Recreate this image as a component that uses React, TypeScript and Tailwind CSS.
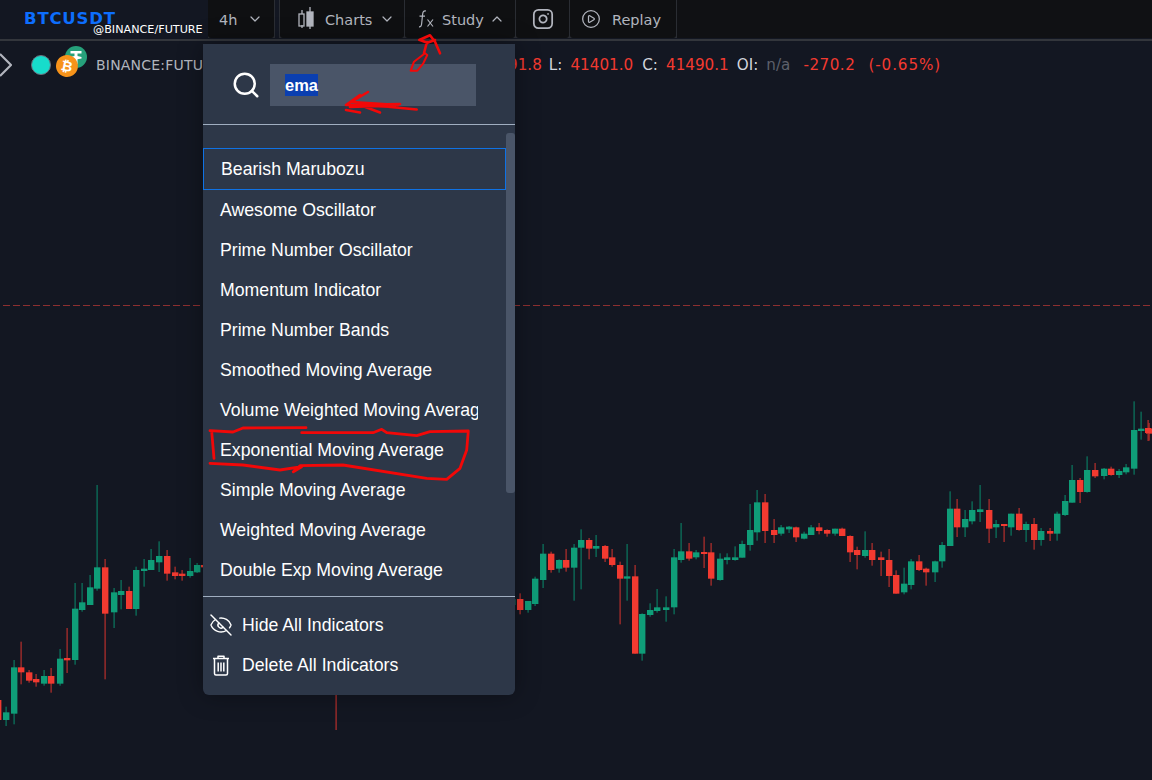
import { ChevronDown, ChevronUp, Search, EyeOff, Instagram, CirclePlay } from 'lucide-react';

type Candle = [number, number, number, number, number, number];

// x, wick top, wick bottom, body top, body bottom (real px), 1 = red
const left: Candle[] = [
  [-6, 690, 750, 690, 750, 1], [18, 710, 768, 727, 750, 0], [41, 570, 763, 592, 731, 0], [63, 515, 643, 592, 607, 1],
  [86, 600, 638, 607, 632, 1], [108, 612, 650, 627, 637, 1], [131, 600, 647, 618, 641, 0], [153, 594, 668, 618, 641, 1],
  [180, 537, 647, 566, 641, 0], [202, 474, 609, 564, 571, 1], [225, 339, 584, 416, 570, 0], [247, 339, 425, 397, 420, 0],
  [270, 315, 405, 352, 405, 0], [292, 45, 362, 292, 356, 0], [315, 267, 628, 292, 431, 1], [341, 354, 474, 367, 427, 0],
  [363, 330, 418, 363, 375, 0], [386, 350, 417, 363, 417, 1], [408, 290, 437, 300, 417, 0], [431, 267, 350, 296, 303, 0],
  [453, 237, 300, 270, 300, 0], [476, 214, 306, 258, 277, 0], [502, 240, 332, 258, 311, 1], [524, 290, 328, 307, 318, 1],
  [547, 300, 332, 311, 318, 1], [570, 264, 323, 303, 318, 0], [592, 279, 309, 285, 307, 0], [612, 280, 300, 285, 292, 1],
];

const middle: Candle[] = [
  [-8, 340, 380, 357, 375, 0], [14, 340, 403, 357, 390, 1], [38, 363, 398, 363, 390, 0], [60, 290, 378, 296, 372, 0],
  [83, 192, 324, 221, 300, 0], [108, 215, 278, 221, 270, 1], [131, 238, 278, 240, 266, 0], [153, 207, 275, 240, 263, 1],
  [176, 192, 362, 203, 263, 0], [198, 148, 328, 180, 203, 0], [221, 174, 238, 180, 206, 1], [243, 165, 231, 198, 206, 0],
  [270, 195, 246, 198, 236, 1], [292, 207, 260, 232, 255, 1], [315, 245, 433, 255, 296, 1], [337, 192, 362, 289, 296, 0],
  [360, 255, 521, 289, 521, 1], [382, 400, 542, 402, 521, 0], [405, 370, 410, 390, 405, 0], [427, 327, 398, 382, 393, 0],
  [453, 349, 425, 382, 390, 0], [476, 207, 403, 232, 382, 0], [498, 129, 248, 214, 240, 0], [521, 189, 242, 214, 236, 1],
  [543, 210, 238, 217, 232, 0], [566, 170, 264, 216, 222, 1], [588, 189, 317, 217, 296, 1], [615, 220, 302, 236, 300, 0],
  [637, 220, 253, 232, 240, 0], [660, 199, 242, 232, 240, 0], [682, 182, 233, 192, 233, 0], [705, 72, 212, 150, 195, 0],
  [727, 30, 182, 67, 157, 0], [750, 42, 189, 67, 153, 1], [776, 117, 189, 150, 165, 1], [798, 135, 167, 142, 161, 0],
  [821, 138, 159, 140, 148, 0], [843, 140, 186, 142, 172, 1], [866, 155, 178, 161, 176, 0], [888, 135, 165, 142, 165, 0],
  [911, 129, 163, 142, 153, 1], [937, 148, 170, 150, 161, 1],
];

const right: Candle[] = [
  [15, 416, 437, 416, 431, 0], [37, 413, 438, 416, 438, 1], [60, 436, 516, 438, 487, 1], [82, 470, 538, 480, 495, 1],
  [105, 424, 503, 480, 498, 0], [127, 459, 527, 480, 510, 1], [153, 485, 558, 502, 510, 1], [176, 477, 591, 510, 558, 1],
  [198, 541, 611, 555, 611, 1], [221, 533, 613, 581, 607, 0], [243, 507, 598, 514, 585, 0], [266, 495, 543, 514, 540, 1],
  [288, 533, 587, 536, 547, 1], [315, 512, 576, 514, 547, 0], [337, 456, 533, 465, 514, 0], [360, 304, 468, 356, 468, 0],
  [382, 327, 441, 356, 412, 1], [405, 360, 441, 387, 412, 0], [427, 334, 403, 360, 394, 0], [450, 285, 396, 358, 366, 0],
  [476, 327, 459, 360, 416, 1], [498, 390, 444, 402, 412, 0], [521, 402, 456, 402, 408, 1], [543, 371, 437, 371, 412, 0],
  [566, 354, 422, 371, 420, 1], [588, 395, 456, 402, 420, 0], [611, 384, 479, 402, 450, 1], [633, 414, 467, 423, 450, 0],
  [660, 414, 453, 423, 431, 1], [682, 365, 452, 371, 431, 0], [705, 315, 378, 333, 375, 0], [727, 225, 338, 270, 338, 0],
  [750, 264, 339, 270, 306, 1], [772, 199, 308, 240, 306, 0], [795, 219, 264, 240, 259, 1], [821, 234, 268, 236, 258, 0],
  [843, 230, 257, 236, 255, 1], [866, 237, 264, 243, 255, 0], [888, 222, 253, 232, 247, 0], [911, 34, 254, 120, 236, 0],
  [933, 65, 149, 116, 123, 0], [956, 99, 152, 116, 131, 1],
];

// zoom crops were 3x, offsets are the crop origin
const toReal = (list: Candle[], ox: number, oy: number) =>
  list.map(([x, wt, wb, bt, bb, red]) => ({
    x: ox + x / 3,
    wt: oy + wt / 3,
    wb: oy + wb / 3,
    bt: oy + bt / 3,
    bb: oy + bb / 3,
    red: red === 1,
  }));

const candles = [
  ...toReal(left, 0, 470),
  ...toReal(middle, 515, 480),
  ...toReal(right, 830, 390),
  { x: 336, wt: 660, wb: 730, bt: 660, bb: 672, red: true },
  { x: 1148, wt: 420, wb: 441, bt: 428, bb: 433, red: true },
];

const indicators = [
  'Awesome Oscillator',
  'Prime Number Oscillator',
  'Momentum Indicator',
  'Prime Number Bands',
  'Smoothed Moving Average',
  'Volume Weighted Moving Average',
  'Exponential Moving Average',
  'Simple Moving Average',
  'Weighted Moving Average',
  'Double Exp Moving Average',
];

function CandleChart() {
  return (
    <svg className="absolute left-0 top-0" width={1152} height={780}>
      <line x1={0} y1={305.5} x2={1152} y2={305.5} stroke="#e0403a" strokeOpacity={0.6} strokeDasharray="7 3" strokeDashoffset={-3} />
      {candles.map((c, i) => {
        const color = c.red ? '#f23a30' : '#0f9d78';
        const wick = c.red ? '#b8302c' : '#0b7a60';
        return (
          <g key={i}>
            <rect x={Math.round(c.x) - 0.5} y={c.wt} width={1.2} height={c.wb - c.wt} fill={wick} />
            <rect x={Math.round(c.x) - 3} y={c.bt} width={6.4} height={Math.max(c.bb - c.bt, 2)} fill={color} />
          </g>
        );
      })}
    </svg>
  );
}

function Annotations() {
  return (
    <svg className="absolute left-0 top-0 pointer-events-none z-20" width={1152} height={780} fill="none" stroke="#f20808" strokeLinecap="round" strokeLinejoin="round">
      <path d="M410.7 70.7 L414 61.7 L425 53.3 L427.3 55 L423.3 63.3 L417.3 70.7 Z" strokeWidth={2} />
      <path d="M419.3 40 L430 35.3 L435 41.7 L440 53.3 M420 40 L427.3 42.7 L435 40 M427 42 L424 53" strokeWidth={2.6} />
      <path d="M346 105 L368 92 M346 105 L360 95 M346 105 L400 104 M350 107 L380 106 L416.7 109.5 M346 110 L360 112.5 M360 105 L380 112.5 M352 102 L398 105 M350 105 L395 107" strokeWidth={2.6} />
      <path d="M210 430.7 L233 432 L243 428 L306 427.7 M301.7 432.7 L373 432.7 L381.7 429.3 L386.7 432.7 L416.7 435.7 L430 431.7 L468.3 431 L466.7 450 L460 468.3 L446.7 479.3 L426.7 478.3 L343 465 L300 465.7 L293.3 471.7 L301.7 466.7 L280 470 L243 465 L210 463.3 M211.7 431.7 L214 458.3" strokeWidth={2.8} />
    </svg>
  );
}

function ToolButton({ children, className }: { children: React.ReactNode; className: string }) {
  return (
    <div className={`h-[38px] flex items-center rounded-b-[3px] bg-[#0f1012] text-[#b2b5be] ${className}`}>
      {children}
    </div>
  );
}

function TopBar() {
  return (
    <div className="relative z-10 h-[41px] shrink-0 flex items-start bg-[#131722] border-b-2 border-[#33363c]">
      <div className="relative w-[208px] h-[38px] shrink-0">
        <span className="absolute left-[24px] top-[9px] text-[16.5px] tracking-[0.8px] leading-[20px] font-bold text-[#0d6efd] font-['DejaVu_Sans',sans-serif]">BTCUSDT</span>
        <span className="absolute left-[93px] top-[23px] text-[11.2px] leading-[14px] text-white font-['DejaVu_Sans',sans-serif]">@BINANCE/FUTURE</span>
      </div>
      <div className="flex-1 flex gap-[1px] bg-[#2a2d33] h-[38px] font-['DejaVu_Sans',sans-serif] text-[14.5px] leading-[20px]">
        <ToolButton className="w-[66px] pl-[11px] gap-[10px]">
          <span className="pt-[2px]">4h</span>
          <ChevronDown size={16} strokeWidth={1.8} />
        </ToolButton>
        <div className="w-[4px] bg-[#131722]" />
        <ToolButton className="w-[124px] pl-[17px] gap-[9px]">
          <svg width="19" height="24" viewBox="0 0 19 24" fill="none" stroke="#b2b5be" strokeWidth="1.3">
            <path d="M5 3v4M5 18v3M13 0v5M13 18v4" />
            <rect x="2" y="7" width="5" height="12" />
            <rect x="10" y="5" width="6" height="14" fill="#b2b5be" />
          </svg>
          <span className="pt-[2px]">Charts</span>
          <ChevronDown size={16} strokeWidth={1.8} className="ml-[-2px]" />
        </ToolButton>
        <ToolButton className="w-[110px] pl-[13px] gap-[7px]">
          <svg width="16" height="18" viewBox="0 0 16 18" fill="none" stroke="#b2b5be" strokeWidth="1.2">
            <path d="M8 1C5.5 0.5 4.8 2 4.6 4.5L3.6 14C3.4 16 2.5 17 1 16.8M1.5 6.2H7" />
            <path d="M9.5 9.5L15 16.5M15 9.5L9.5 16.5" />
          </svg>
          <span className="pt-[2px] ml-[1px]">Study</span>
          <ChevronUp size={16} strokeWidth={1.8} className="ml-[-2px]" />
        </ToolButton>
        <ToolButton className="w-[53px] justify-center">
          <Instagram size={22} strokeWidth={1.9} />
        </ToolButton>
        <ToolButton className="w-[106px] pl-[11px] gap-[11px]">
          <CirclePlay size={20} strokeWidth={1.5} />
          <span className="pt-[2px]">Replay</span>
        </ToolButton>
        <div className="flex-1 bg-[#101114]" />
      </div>
    </div>
  );
}

function SymbolLegend() {
  return (
    <div className="relative z-[1] h-[48px] flex items-center text-[14px] font-['DejaVu_Sans',sans-serif]">
      <svg width="12" height="26" viewBox="0 0 12 26" fill="none" stroke="#b2b5be" strokeWidth="2.2" className="shrink-0">
        <path d="M0 2L11 13L0 24" />
      </svg>
      <span className="ml-[19px] w-[20px] h-[20px] rounded-full bg-[#17dccb] border border-[#6b7280]" />
      <div className="relative ml-[3px] w-[24px] h-[32px]">
        <svg className="absolute left-[11px] top-[-3px]" width="22" height="22" viewBox="0 0 22 22">
          <circle cx="11" cy="11" r="11" fill="#26a17b" />
          <path d="M5.5 5H16.5V7.5H12.5V10L16.5 11V12.5L12.5 13.2V18H9.5V13.2L5.5 12.5V11L9.5 10V7.5H5.5Z" fill="white" />
        </svg>
        <span className="absolute left-[2px] top-[6px] w-[22px] h-[22px] rounded-full bg-[#f7931a] text-white text-[14px] leading-[22px] text-center font-bold rotate-[12deg]">₿</span>
      </div>
      <span className="ml-[18px] text-[#b2b5be] tracking-[0.2px] whitespace-nowrap">BINANCE:FUTURES</span>
      <div className="absolute left-[508px] top-[15px] flex text-[15.2px] leading-[18px] whitespace-nowrap">
        <span className="text-[#f23a30]">91.8</span>
        <span className="text-[#d1d4dc] ml-[7px]">L:</span>
        <span className="text-[#f23a30] ml-[8px]">41401.0</span>
        <span className="text-[#d1d4dc] ml-[9px]">C:</span>
        <span className="text-[#f23a30] ml-[8px]">41490.1</span>
        <span className="text-[#d1d4dc] ml-[8px]">OI:</span>
        <span className="text-[#5d606b] ml-[8px]">n/a</span>
        <span className="text-[#f23a30] ml-[13px] tracking-[0.5px]">-270.2</span>
        <span className="text-[#f23a30] ml-[13px] tracking-[0.9px]">(-0.65%)</span>
      </div>
    </div>
  );
}

function TrashIcon() {
  return (
    <svg width="24" height="24" viewBox="0 0 24 24" fill="none" stroke="white" strokeWidth="1.5" strokeLinejoin="round">
      <path d="M4 5.5H20M9 5V3.2H15V5" />
      <path d="M5.5 6V20.5C5.5 21.5 6 22 7 22H17C18 22 18.5 21.5 18.5 20.5V6" />
      <path d="M9.2 9.5V18.5M12 9.5V18.5M14.8 9.5V18.5" />
    </svg>
  );
}

function StudyMenu() {
  return (
    <div className="absolute left-[203px] top-[3px] z-10 w-[312px] h-[651px] rounded-b-[6px] bg-[#2d3748] flex flex-col font-['Liberation_Sans',sans-serif] text-white text-[17.7px] shadow-[0_0_24px_rgba(0,0,0,0.35)]">
      <div className="h-[81px] shrink-0 flex items-center pl-[28px] pt-[1px] gap-[9px] border-b border-[#a0aec0]">
        <Search size={30} strokeWidth={2} className="text-white" />
        <div className="w-[206px] h-[42px] bg-[#4a5568] flex items-center pl-[15px]">
          <span className="bg-[#0b3fb0] font-bold text-[16.5px] leading-[22px]">ema</span>
        </div>
      </div>
      <div className="relative h-[472px] shrink-0 pt-[23px] border-b border-[#a0aec0]">
        <div className="absolute right-0 top-[8px] w-[9px] h-[360px] rounded-[3px] bg-[#4a5568]" />
        <div className="h-[42px] w-[303px] flex items-center pl-[17px] border border-[#0f72e5]">Bearish Marubozu</div>
        <div className="w-[275px] overflow-hidden">
          {indicators.map((name) => (
            <div key={name} className="h-[40px] pl-[17px] flex items-center whitespace-nowrap">{name}</div>
          ))}
        </div>
      </div>
      <div className="pt-[8px]">
        <div className="h-[40px] flex items-center pl-[6px] gap-[9px]">
          <EyeOff size={24} strokeWidth={1.4} />
          Hide All Indicators
        </div>
        <div className="h-[40px] flex items-center pl-[6px] gap-[9px]">
          <TrashIcon />
          Delete All Indicators
        </div>
      </div>
    </div>
  );
}

export default function App() {
  return (
    <div className="relative w-[1152px] h-[780px] overflow-hidden bg-[#131722] flex flex-col">
      <CandleChart />
      <TopBar />
      <div className="relative flex-1">
        <SymbolLegend />
        <StudyMenu />
      </div>
      <Annotations />
    </div>
  );
}
